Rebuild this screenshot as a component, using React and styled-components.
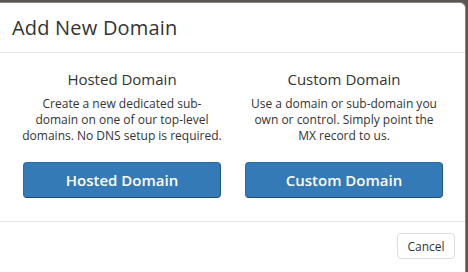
import React from "react";
import styled, { createGlobalStyle } from "styled-components";

const Global = createGlobalStyle`
  html, body {
    margin: 0;
    padding: 0;
    background: #5b5451;
    width: 468px;
    height: 272px;
    overflow: hidden;
  }
  * { box-sizing: border-box; }
  body {
    font-family: "Open Sans", "Noto Sans", sans-serif;
    color: #333;
  }
`;

const Backdrop = styled.div`
  padding-top: 2px;
  width: 468px;
  height: 272px;
`;

const Modal = styled.div`
  width: 466px;
  height: 270px;
  background: #fff;
  border: 1px solid #8a8482;
  border-left: none;
  border-bottom: none;
  border-radius: 0 6px 0 0;
`;

const Header = styled.div`
  height: 50px;
  padding: 0 12px;
  display: flex;
  align-items: center;
  border-bottom: 1px solid #e5e5e5;
`;

const Title = styled.h4`
  margin: 0;
  font-size: 20px;
  font-weight: 400;
  color: #333;
  letter-spacing: 0.2px;
`;

const Body = styled.div`
  padding: 16px 11px 23px 11px;
  display: grid;
  grid-template-columns: 222px 222px;
  border-bottom: 1px solid #e5e5e5;
`;

const Column = styled.div`
  display: flex;
  flex-direction: column;
  align-items: center;
  text-align: center;
`;

const Heading = styled.h5`
  margin: 0 0 7px;
  font-size: 15px;
  line-height: 20px;
  font-weight: 400;
  color: #333;
`;

const Desc = styled.p`
  margin: 0;
  font-size: 12px;
  line-height: 16px;
  color: #333;
  height: 48px;
  white-space: nowrap;
`;

const PrimaryButton = styled.button`
  margin-top: 18px;
  width: 198px;
  height: 36px;
  background: #337ab7;
  border: 1px solid #2e6da4;
  border-bottom-color: #1f4c74;
  border-right-color: #24578a;
  border-radius: 4px;
  color: #fff;
  font-family: "Open Sans", "Noto Sans", sans-serif;
  font-size: 15px;
  font-weight: 600;
  cursor: pointer;
`;

const Footer = styled.div`
  display: flex;
  justify-content: flex-end;
  padding: 11px 10px 0 0;
`;

const DefaultButton = styled.button`
  width: 58px;
  height: 26px;
  background: #fff;
  border: 1px solid #ddd;
  border-radius: 4px;
  color: #333;
  font-family: "Open Sans", "Noto Sans", sans-serif;
  font-size: 12px;
  cursor: pointer;
`;

const options = [
  {
    title: "Hosted Domain",
    lines: ["Create a new dedicated sub-", "domain on one of our top-level", "domains. No DNS setup is required."],
  },
  {
    title: "Custom Domain",
    lines: ["Use a domain or sub-domain you", "own or control. Simply point the", "MX record to us."],
  },
];

export default function App() {
  return (
    <>
      <Global />
      <Backdrop>
        <Modal>
          <Header>
            <Title>Add New Domain</Title>
          </Header>
          <Body>
            {options.map((o) => (
              <Column key={o.title}>
                <Heading>{o.title}</Heading>
                <Desc>
                  {o.lines.map((l, i) => (
                    <React.Fragment key={i}>
                      {l}
                      {i < o.lines.length - 1 && <br />}
                    </React.Fragment>
                  ))}
                </Desc>
                <PrimaryButton>{o.title}</PrimaryButton>
              </Column>
            ))}
          </Body>
          <Footer>
            <DefaultButton>Cancel</DefaultButton>
          </Footer>
        </Modal>
      </Backdrop>
    </>
  );
}
